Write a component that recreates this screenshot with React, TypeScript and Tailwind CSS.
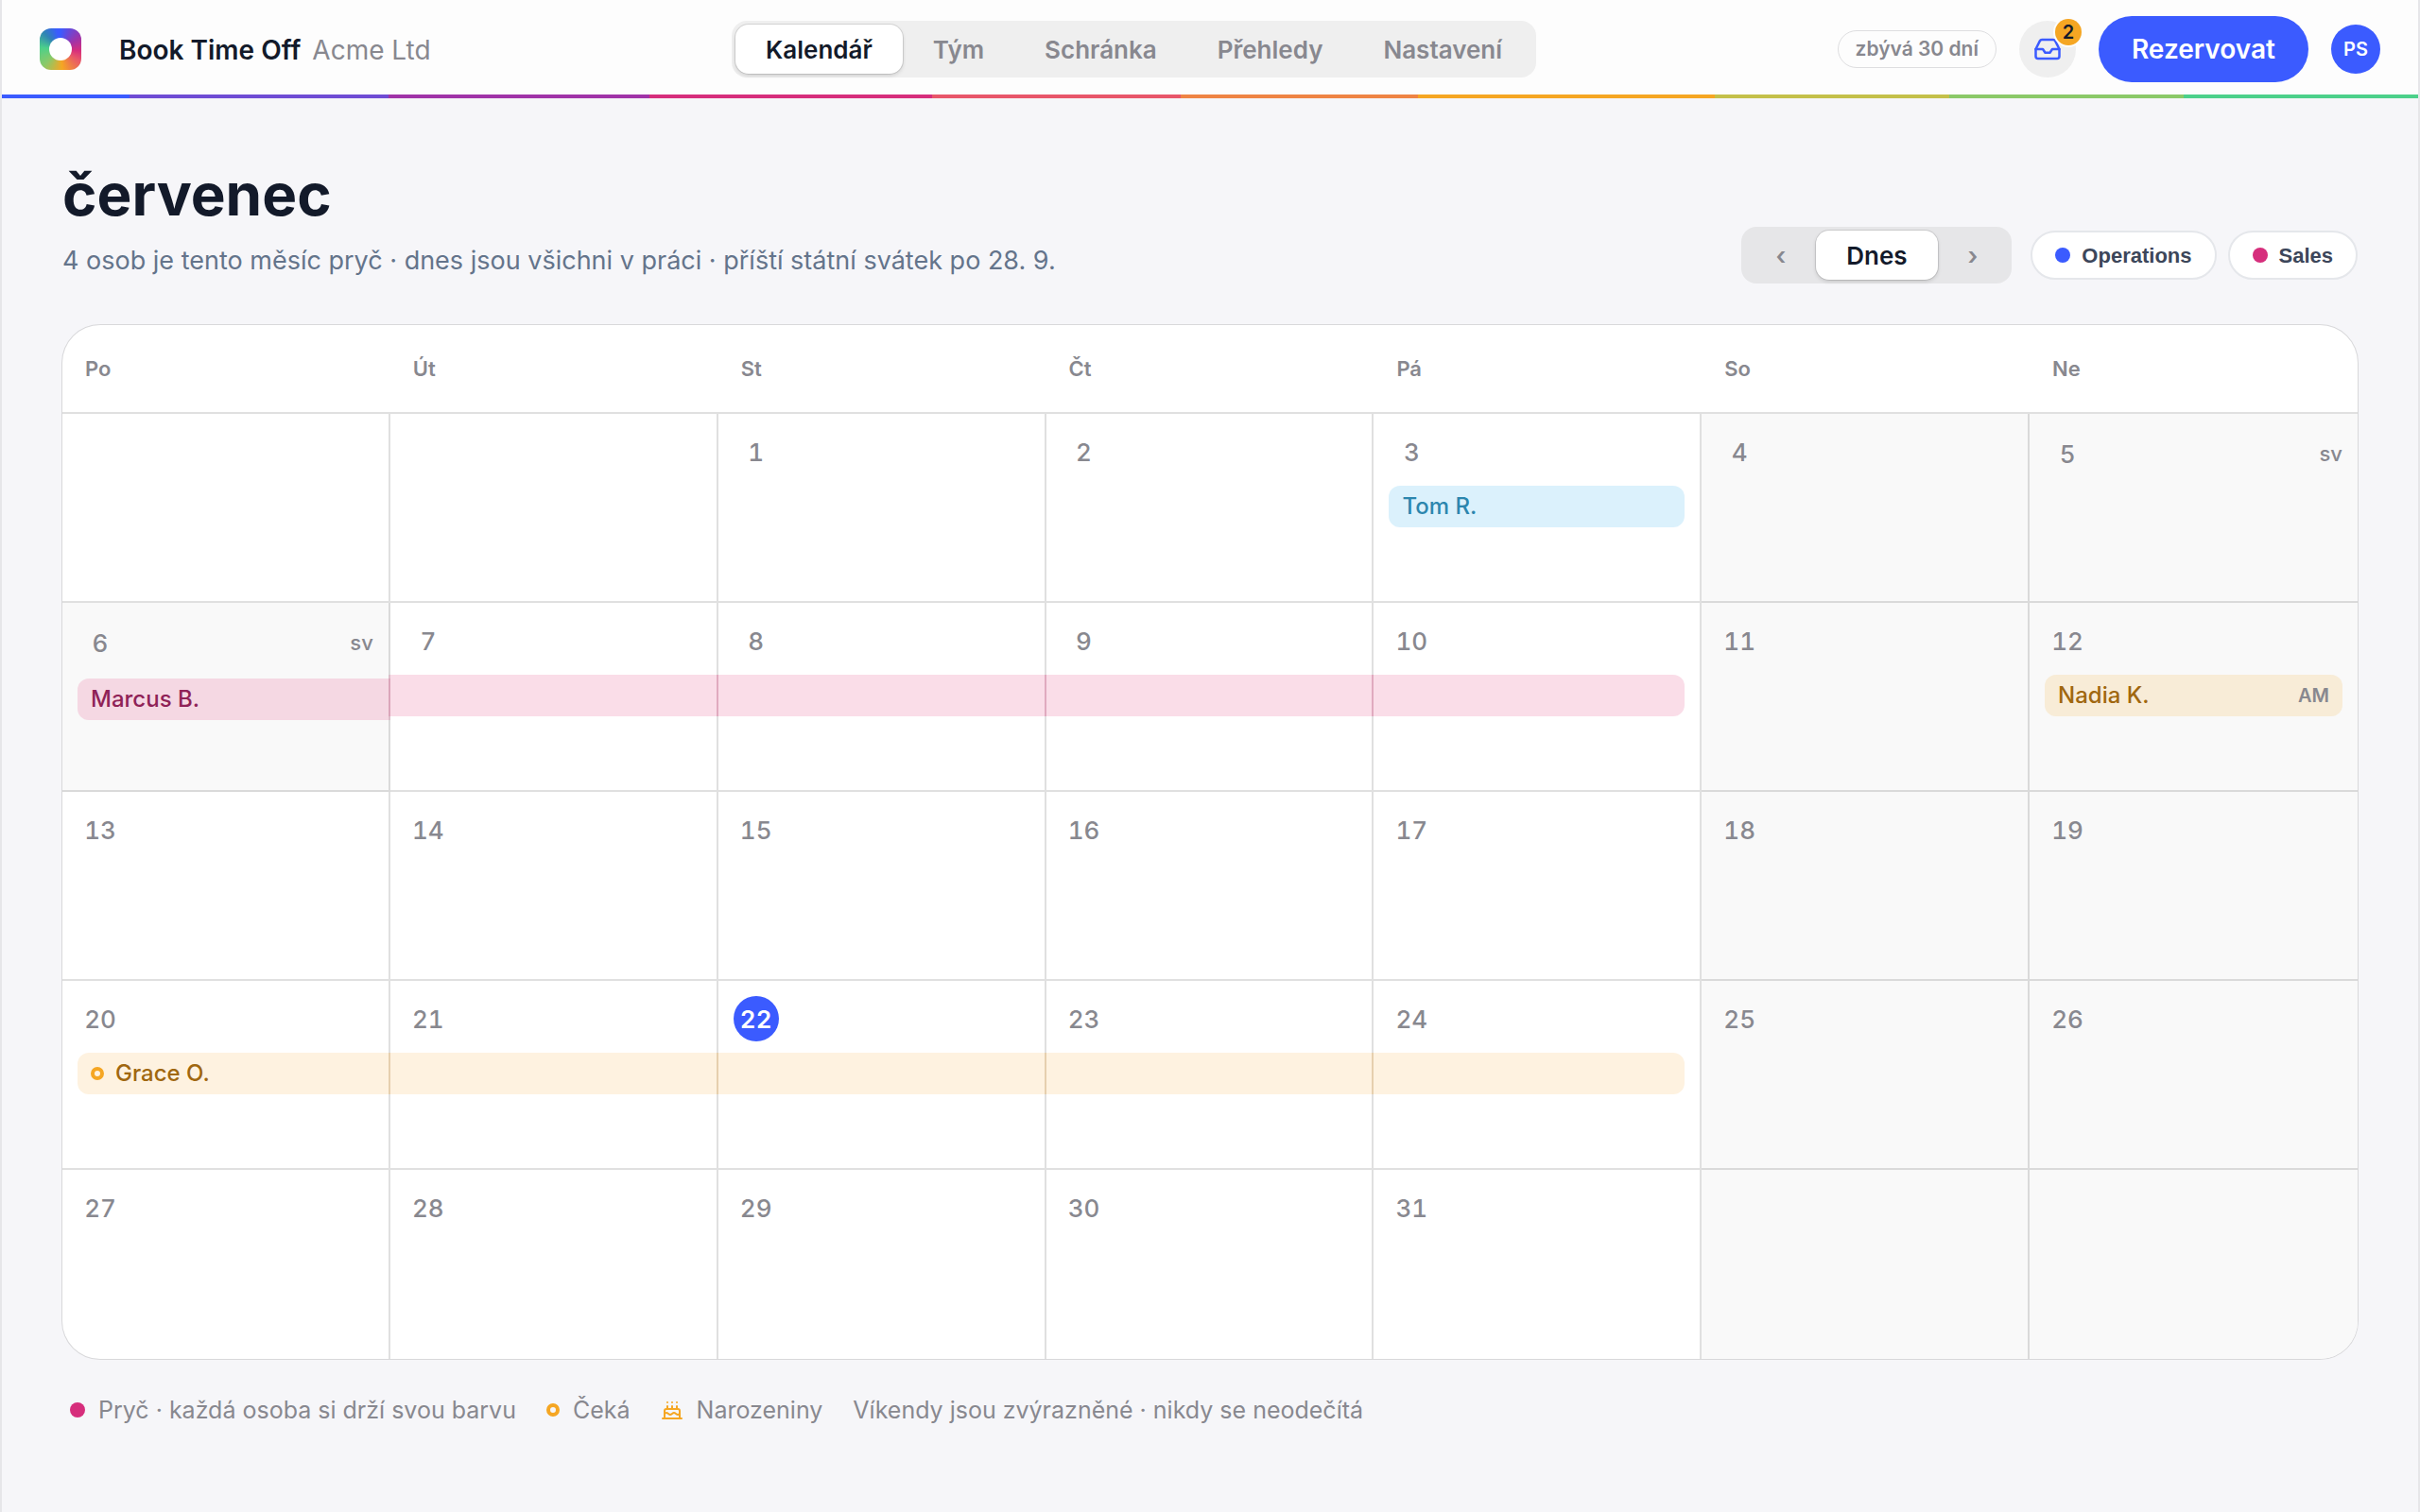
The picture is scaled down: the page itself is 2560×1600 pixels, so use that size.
import React, { useState } from 'react';
import { Cake, Inbox } from 'lucide-react';

type Color = 'blue' | 'pink' | 'amber' | 'pending';

interface Segment {
  color: Color;
  label?: string;
  half?: string;
  start?: boolean;
  end?: boolean;
}

interface Day {
  day?: number;
  off?: boolean;
  holiday?: boolean;
  segment?: Segment;
}

const NAV = ['Kalendář', 'Tým', 'Schránka', 'Přehledy', 'Nastavení'];
const WEEKDAYS = ['Po', 'Út', 'St', 'Čt', 'Pá', 'So', 'Ne'];
const TODAY = 22;
const HOLIDAYS = [5, 6];

const SEGMENTS: Record<number, Segment> = {
  3: { color: 'blue', label: 'Tom R.', start: true, end: true },
  6: { color: 'pink', label: 'Marcus B.', start: true },
  7: { color: 'pink' },
  8: { color: 'pink' },
  9: { color: 'pink' },
  10: { color: 'pink', end: true },
  12: { color: 'amber', label: 'Nadia K.', half: 'AM', start: true, end: true },
  20: { color: 'pending', label: 'Grace O.', start: true },
  21: { color: 'pending' },
  22: { color: 'pending' },
  23: { color: 'pending' },
  24: { color: 'pending', end: true },
};

const SEGMENT_COLORS: Record<Color, string> = {
  blue: 'bg-[#1ea8ec]/16 text-[#2c86ae]',
  pink: 'bg-[#e02a6f]/16 text-[#8f2257]',
  amber: 'bg-[#f5a623]/16 text-[#a0670f]',
  pending: 'bg-[#f5a623]/14 text-[#a0670f]',
};

// The month starts on a Wednesday, so the first two cells are empty
const WEEKS: Day[][] = Array.from({ length: 5 }, (_, week) =>
  Array.from({ length: 7 }, (_, col) => {
    const n = week * 7 + col - 1;
    const day = n >= 1 && n <= 31 ? n : undefined;
    const holiday = day !== undefined && HOLIDAYS.includes(day);
    return {
      day,
      holiday,
      off: col > 4 || holiday,
      segment: day ? SEGMENTS[day] : undefined,
    };
  })
);

function Logo() {
  return (
    <div className="flex size-11 items-center justify-center rounded-xl bg-[conic-gradient(#3b5bff_0deg,#a033a8_60deg,#d62e7c_95deg,#e8566a_120deg,#f5a623_175deg,#8bc968_225deg,#4cd08a_275deg,#2f84b4_315deg,#3b5bff_350deg)]">
      <div className="size-6 rounded-full bg-white" />
    </div>
  );
}

function Ring() {
  return <span className="size-3.5 shrink-0 rounded-full border-4 border-[#f5a623]" />;
}

function Header() {
  const [active, setActive] = useState('Kalendář');

  return (
    <header className="bg-[#fdfdfd]">
      <div className="flex h-[100px] items-center justify-between px-10 pt-1">
        <div className="flex items-center gap-10">
          <Logo />
          <div className="flex items-baseline gap-3 pt-0.5 text-[28px] leading-9">
            <span className="font-semibold text-[#131a2a]">Book Time Off</span>
            <span className="text-[#88888f]">Acme Ltd</span>
          </div>
        </div>

        <nav className="flex rounded-2xl bg-[#efefef] p-1">
          {NAV.map((item) => (
            <button
              key={item}
              onClick={() => setActive(item)}
              className={`h-[52px] rounded-[14px] px-8 text-[26px] font-semibold ${
                active === item
                  ? 'bg-white text-[#131a2a] shadow-[0_0_0_1px_rgba(0,0,0,0.1),0_2px_4px_rgba(0,0,0,0.14)]'
                  : 'text-[#88888f]'
              }`}
            >
              {item}
            </button>
          ))}
        </nav>

        <div className="flex items-center gap-6">
          <span className="flex h-10 items-center rounded-full border border-[#dedee0] px-[18px] text-[21px] font-semibold text-[#88888f]">
            zbývá 30 dní
          </span>
          <button
            aria-label="Schránka"
            className="relative flex size-[60px] items-center justify-center rounded-full bg-[#efefef] text-[#3b5bff]"
          >
            <Inbox size={30} strokeWidth={2} />
            <span className="absolute -right-1.5 -top-0.5 flex size-7 items-center justify-center rounded-full bg-[#f5a623] text-[20px] font-semibold text-[#131a2a] ring-2 ring-[#fdfdfd]">
              2
            </span>
          </button>
          <button className="h-[70px] rounded-full bg-[#3b5bff] px-[35px] text-[28px] font-semibold text-white">
            Rezervovat
          </button>
          <button className="size-[52px] rounded-full bg-[#3b5bff] text-[20px] font-semibold text-white">
            PS
          </button>
        </div>
      </div>
      <div className="h-1 bg-[linear-gradient(to_right,#3b5bff_5.3%,#6f4cd4_5.3%_16%,#a033a8_16%_26.8%,#d62e7c_26.8%_38.5%,#e8566a_38.5%_48.8%,#ef8444_48.8%_58.6%,#f5a623_58.6%_70.9%,#c4c04a_70.9%_80.6%,#8bc968_80.6%_90.3%,#4cd08a_90.3%)]" />
    </header>
  );
}

function MonthControls() {
  return (
    <div className="flex items-center gap-5">
      <div className="flex rounded-2xl bg-[#e6e6e8] p-1 text-[26px] font-semibold text-[#88888f]">
        <button aria-label="Předchozí měsíc" className="h-[52px] px-8">‹</button>
        <button className="h-[52px] rounded-[14px] bg-white px-8 text-[#131a2a] shadow-[0_0_0_1px_rgba(0,0,0,0.1),0_2px_4px_rgba(0,0,0,0.14)]">
          Dnes
        </button>
        <button aria-label="Další měsíc" className="h-[52px] px-8">›</button>
      </div>
      <div className="flex gap-3 font-['Liberation_Sans',sans-serif] text-[22px] font-bold text-[#3c465a]">
        <button className="flex h-[52px] items-center gap-3 rounded-full border-2 border-[#e5e7eb] bg-white px-6">
          <span className="size-4 rounded-full bg-[#3b5bff]" />
          Operations
        </button>
        <button className="flex h-[52px] items-center gap-3 rounded-full border-2 border-[#e5e7eb] bg-white px-6">
          <span className="size-4 rounded-full bg-[#d62e7c]" />
          Sales
        </button>
      </div>
    </div>
  );
}

function SegmentBar({ segment }: { segment: Segment }) {
  return (
    <div
      className={`mt-3 flex h-11 items-center gap-3 px-3.5 text-[24px] font-medium ${SEGMENT_COLORS[segment.color]} ${
        segment.start ? 'rounded-l-xl' : '-ml-[18px]'
      } ${segment.end ? 'rounded-r-xl' : '-mr-[18px]'}`}
    >
      {segment.label && segment.color === 'pending' && <Ring />}
      {segment.label}
      {segment.half && (
        <span className="ml-auto text-[20px] font-semibold text-[#88888f]">{segment.half}</span>
      )}
    </div>
  );
}

function DayCell({ cell }: { cell: Day }) {
  return (
    <td
      className={`h-[200px] border-b-2 border-r-2 border-black/12 p-4 align-top last:border-r-0 group-last:border-b-0 ${
        cell.off ? 'bg-[#f9f9f9]' : ''
      }`}
    >
      {cell.day && (
        <div className={`flex items-center justify-between ${cell.holiday ? 'h-[52px]' : 'h-12'}`}>
          <span
            className={`flex size-12 items-center justify-center rounded-full text-[26px] tabular-nums ${
              cell.day === TODAY
                ? 'bg-[#3b5bff] font-semibold text-white'
                : 'font-medium text-[#88888f]'
            }`}
          >
            {cell.day}
          </span>
          {cell.holiday && <span className="text-[22px] font-medium text-[#88888f]">sv</span>}
        </div>
      )}
      {cell.segment && <SegmentBar segment={cell.segment} />}
    </td>
  );
}

function Calendar() {
  return (
    <div className="overflow-hidden rounded-[40px] bg-white shadow-[0_0_0_1px_rgba(0,0,0,0.12)]">
      <table className="w-full table-fixed border-separate border-spacing-0">
        <thead>
          <tr>
            {WEEKDAYS.map((name) => (
              <th
                key={name}
                className="h-[94px] border-b-2 border-black/12 px-6 text-left text-[22px] font-semibold text-[#88888f]"
              >
                {name}
              </th>
            ))}
          </tr>
        </thead>
        <tbody>
          {WEEKS.map((week, idx) => (
            <tr key={idx} className="group">
              {week.map((cell, col) => (
                <DayCell key={col} cell={cell} />
              ))}
            </tr>
          ))}
        </tbody>
      </table>
    </div>
  );
}

function Legend() {
  return (
    <div className="mt-9 flex items-center gap-8 px-2 text-[25px] leading-9 text-[#88888f]">
      <span className="flex items-center gap-3.5">
        <span className="size-4 rounded-full bg-[#d62e7c]" />
        Pryč · každá osoba si drží svou barvu
      </span>
      <span className="flex items-center gap-3.5">
        <Ring />
        Čeká
      </span>
      <span className="flex items-center gap-3.5">
        <Cake size={24} className="text-[#f5a623]" />
        Narozeniny
      </span>
      <span>Víkendy jsou zvýrazněné · nikdy se neodečítá</span>
    </div>
  );
}

export default function App() {
  return (
    <div className="min-h-screen border-x-2 border-[#e6e6e9] bg-[#f6f6f9] font-['Inter',sans-serif]">
      <Header />
      <main className="px-16 pt-16">
        <div className="flex items-end justify-between">
          <div>
            <h1 className="text-[62px] font-bold leading-[76px] text-[#131a2a]">červenec</h1>
            <p className="mt-2 text-[27px] leading-[48px] text-[#64748b]">
              4 osob je tento měsíc pryč · dnes jsou všichni v práci · příští státní svátek po 28. 9.
            </p>
          </div>
          <MonthControls />
        </div>
        <div className="mt-11">
          <Calendar />
        </div>
        <Legend />
      </main>
    </div>
  );
}
